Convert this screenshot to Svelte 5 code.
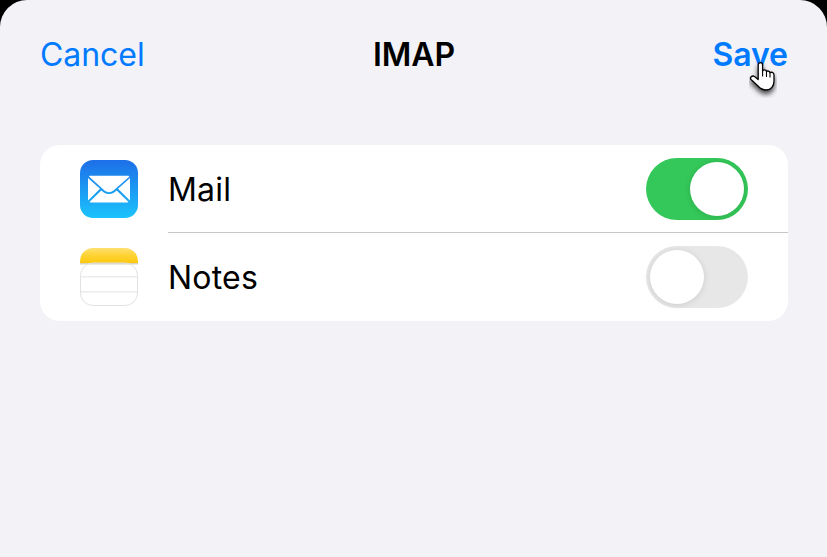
<script>
  const rows = [
    { name: 'Mail', icon: 'mail', on: true },
    { name: 'Notes', icon: 'notes', on: false }
  ];
</script>

<div class="sheet">
  <header class="nav">
    <span class="btn">Cancel</span>
    <span class="title">IMAP</span>
    <span class="btn save">Save</span>
  </header>

  <section class="card">
    {#each rows as row}
      <div class="row">
        <div class="icon">
          {#if row.icon === 'mail'}
            <svg viewBox="0 0 58 58" width="58" height="58">
              <defs>
                <linearGradient id="mg" x1="0" y1="0" x2="0" y2="1">
                  <stop offset="0" stop-color="#1d6fe8" />
                  <stop offset="1" stop-color="#1bc3fd" />
                </linearGradient>
              </defs>
              <rect width="58" height="58" rx="13" fill="url(#mg)" />
              <path d="M9 16.500L9.500 15.800H48.500L49.500 16.500L33.500 30.500Q29 33.800 24.500 30.500Z" fill="#fff" />
              <path d="M8 18L20 28.800L8 40.500Z M50 18V40.500L38 28.800Z" fill="#fff" />
              <path d="M9.500 42L21.300 30.500L23.500 32.200Q29 36 34.500 32.200L36.700 30.500L48.500 42L47.500 42.500H10.500Z" fill="#fff" />
            </svg>
          {:else}
            <svg viewBox="0 0 58 58" width="58" height="58">
              <defs>
                <linearGradient id="ng" x1="0" y1="0" x2="0" y2="1">
                  <stop offset="0" stop-color="#fee070" />
                  <stop offset=".5" stop-color="#fed233" />
                  <stop offset="1" stop-color="#fdc90e" />
                </linearGradient>
                <clipPath id="nc"><rect width="58" height="58" rx="13" /></clipPath>
              </defs>
              <rect width="58" height="58" rx="13" fill="#fff" />
              <g clip-path="url(#nc)">
                <rect width="58" height="15" fill="url(#ng)" />
                <rect y="15" width="58" height="1.500" fill="#d9d3c0" />
                <rect y="28" width="58" height="1.500" fill="#ececec" />
                <rect y="43" width="58" height="1.500" fill="#ececec" />
              </g>
              <rect x=".5" y="15" width="57" height="42.500" rx="12.500" fill="none" stroke="#e2e2e2" />
            </svg>
          {/if}
        </div>
        <div class="main">
          <span class="label">{row.name}</span>
          <span class="toggle" class:on={row.on}><span class="knob"></span></span>
        </div>
      </div>
    {/each}
  </section>

  <svg class="cursor" viewBox="0 0 28 38" width="28" height="38">
    <defs>
      <filter id="sh" x="-40%" y="-40%" width="180%" height="180%">
        <feDropShadow dx="0" dy="3.500" stdDeviation="2.500" flood-color="#000" flood-opacity=".7" />
      </filter>
    </defs>
    <path filter="url(#sh)" d="M9.200 5C9.200 1.800 13.600 1.800 13.600 5V10.800C14.600 9.500 17 9.600 17.500 11.500C18.500 10.500 20.600 11 21 12.700C22 11.800 25 12.200 25 15V21C25 26 22 30 17.500 30C13 30 11 28.500 9 26L2 19.500C0.500 17.500 3 15 5.500 16.500L9.200 19.500Z" fill="#fff" stroke="#000" stroke-width="1.300" stroke-linejoin="round" />
    <path d="M13.600 11V16M17.500 11.800V16.500M21 13V17" stroke="#000" stroke-width="1.100" stroke-linecap="round" fill="none" />
  </svg>
</div>

<style>
  :global(body) {
    margin: 0;
    background: #000;
  }
  .sheet {
    position: relative;
    height: 557px;
    box-sizing: border-box;
    background: #f2f2f7;
    border-radius: 27px 27px 0 0;
    padding: 0 39px 0 40px;
    overflow: hidden;
    font-family: Inter, "Liberation Sans", sans-serif;
    color: #000;
  }
  .nav {
    height: 108px;
    display: grid;
    grid-template-columns: 1fr auto 1fr;
    align-items: center;
    font-size: 32px;
    letter-spacing: -0.05px;
  }
  .btn {
    color: #007aff;
    font-weight: 400;
  }
  .save {
    justify-self: end;
    font-weight: 600;
  }
  .title {
    font-weight: 600;
  }
  .card {
    margin-top: 37px;
    background: #fff;
    border-radius: 20px;
    overflow: hidden;
  }
  .row {
    display: flex;
    align-items: center;
    height: 88px;
    padding-left: 40px;
  }
  .icon {
    width: 58px;
    height: 58px;
    flex: none;
    margin-right: 30px;
  }
  .icon svg {
    display: block;
  }
  .main {
    flex: 1;
    align-self: stretch;
    display: flex;
    align-items: center;
    justify-content: space-between;
    padding-right: 40px;
  }
  .row:first-child .main {
    box-shadow: inset 0 -1px 0 #c6c6c8;
  }
  .label {
    font-size: 32px;
    letter-spacing: 0.2px;
  }
  .toggle {
    width: 102px;
    height: 62px;
    border-radius: 31px;
    background: #e7e7e8;
    display: flex;
    align-items: center;
    padding: 0 4px;
    box-sizing: border-box;
  }
  .toggle.on {
    background: #34c759;
    justify-content: flex-end;
  }
  .knob {
    width: 54px;
    height: 54px;
    border-radius: 50%;
    background: #fff;
    box-shadow: 0 1px 6px rgba(0, 0, 0, 0.12);
  }
  .cursor {
    position: absolute;
    left: 749px;
    top: 60px;
  }
</style>
